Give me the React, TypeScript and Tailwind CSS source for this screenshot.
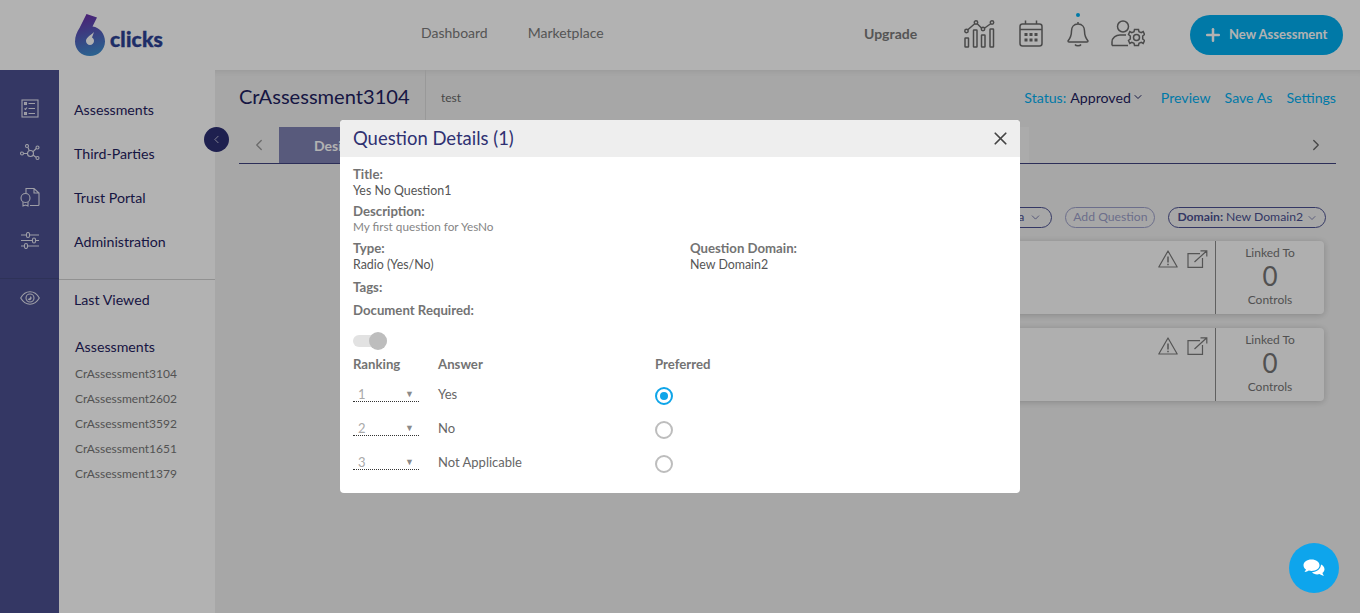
import { ChevronDown, ChevronLeft, ChevronRight, X, Plus } from 'lucide-react'

const sideNav = ['Assessments', 'Third-Parties', 'Trust Portal', 'Administration']
const recent = ['CrAssessment3104', 'CrAssessment2602', 'CrAssessment3592', 'CrAssessment1651', 'CrAssessment1379']
const answers = [
  { rank: 1, label: 'Yes', on: true },
  { rank: 2, label: 'No', on: false },
  { rank: 3, label: 'Not Applicable', on: false },
]

function Logo() {
  return (
    <div className="flex items-end">
      <svg width="32" height="44" viewBox="0 0 32 44" className="block">
        <defs>
          <linearGradient id="six" x1="0.4" y1="0" x2="0.6" y2="1">
            <stop offset="0" stopColor="#6a2fa8" />
            <stop offset="1" stopColor="#3c8fcf" />
          </linearGradient>
        </defs>
        <path
          fillRule="evenodd"
          fill="url(#six)"
          d="M12.500 0 L23 3.500 L18.500 12.500 C26 13.500 31 20 31 27.500 C31 36 24 42 16 42 C7.500 42 1 36 1 27.500 C1 22 3 18 5.500 14 Z M20 18 C18.500 20 12 23 12 27 C12 29.200 13.800 31 16 31 C18.200 31 20 29.200 20 27 C20 25 19 24 18 23.500 Z"
        />
      </svg>
      <span className="mb-[9px] ml-[4px] text-[21px] leading-none font-black tracking-[0.2px] text-[#2b4194] [-webkit-text-stroke:0.4px_#2b4194]">clicks</span>
    </div>
  )
}

function TrendIcon() {
  return (
    <svg width="32" height="28" viewBox="0 0 32 28" fill="none" stroke="#6b6b6b" strokeWidth="1.500" className="block">
      <path d="M3.500 10 L11 3.500 M13 3.500 L18 8.500 M20 8.500 L27 3.500" />
      <circle cx="2.500" cy="11" r="1.700" />
      <circle cx="12" cy="2.500" r="1.700" />
      <circle cx="19" cy="9" r="1.700" />
      <circle cx="28" cy="2.500" r="1.700" />
      <rect x="1" y="18" width="3.500" height="9" rx="0.500" />
      <rect x="9.500" y="10" width="3.500" height="17" rx="0.500" />
      <rect x="17.500" y="15" width="3.500" height="12" rx="0.500" />
      <rect x="26" y="9" width="3.500" height="18" rx="0.500" />
    </svg>
  )
}

function CalendarIcon() {
  return (
    <svg width="24" height="27" viewBox="0 0 24 27" fill="none" stroke="#6b6b6b" strokeWidth="1.500" className="block">
      <rect x="1" y="4" width="22" height="22" rx="2.500" />
      <path d="M1 9.500 H23 M6.500 0.500 V4 M17.500 0.500 V4" />
      <g fill="#6b6b6b" stroke="none">
        <rect x="5.500" y="13" width="3" height="3" />
        <rect x="10.500" y="13" width="3" height="3" />
        <rect x="15.500" y="13" width="3" height="3" />
        <rect x="5.500" y="18.500" width="3" height="3" />
        <rect x="10.500" y="18.500" width="3" height="3" />
        <rect x="15.500" y="18.500" width="3" height="3" />
      </g>
    </svg>
  )
}

function BellIcon() {
  return (
    <svg width="22" height="26" viewBox="0 0 22 26" fill="none" stroke="#6b6b6b" strokeWidth="1.500" className="block">
      <path d="M11 1 V3 M11 3 C6.500 3 4.500 6.500 4.500 10 C4.500 15 3 17.500 1 20 C1 20.800 1.500 21 2 21 H20 C20.500 21 21 20.800 21 20 C19 17.500 17.500 15 17.500 10 C17.500 6.500 15.500 3 11 3 Z" />
      <path d="M8 23.500 C9 25.200 13 25.200 14 23.500" />
    </svg>
  )
}

function UserGearIcon() {
  return (
    <svg width="34" height="27" viewBox="0 0 34 27" fill="none" stroke="#6b6b6b" strokeWidth="1.500" className="block">
      <circle cx="12" cy="6.500" r="5.500" />
      <path d="M1 25.500 V22 C1 17.500 5 15 9 15 H15 M1 25.500 H17" />
      <circle cx="25.500" cy="17.500" r="3" />
      <path d="M23.500 9.500 H27.500 L28 11.800 L30.200 12.700 L32.200 11.500 L33.500 14.500 L31.700 16 V19 L33.500 20.500 L32.200 23.500 L30.200 22.300 L28 23.200 L27.500 25.500 H23.500 L23 23.200 L20.800 22.300 L18.800 23.500 L17.500 20.500 L19.300 19 V16 L17.500 14.500 L18.800 11.500 L20.800 12.700 L23 11.800 Z" />
    </svg>
  )
}

function ChecklistIcon() {
  return (
    <svg width="18" height="19" viewBox="0 0 18 19" fill="none" stroke="#e2e2ee" strokeWidth="1.100" className="block">
      <rect x="1" y="1" width="16" height="17" />
      <path d="M7.500 4.500 H14 M7.500 9.500 H14 M7.500 14.500 H14" />
      <rect x="3.500" y="3.500" width="2" height="2" />
      <path d="M3.500 9.500 L4.500 10.500 L6 8.500" />
      <rect x="3.500" y="13.500" width="2" height="2" />
    </svg>
  )
}

function NetworkIcon() {
  return (
    <svg width="20" height="18" viewBox="0 0 20 18" fill="none" stroke="#e2e2ee" strokeWidth="1.100" className="mt-[1px] block">
      <circle cx="10.500" cy="9.500" r="3" />
      <circle cx="7" cy="2" r="1.500" />
      <circle cx="17.500" cy="3.500" r="1.500" />
      <circle cx="2" cy="9.500" r="1.500" />
      <circle cx="17.500" cy="14" r="1.500" />
      <path d="M8 3.500 L9.300 6.800 M16.300 4.500 L12.800 7.800 M3.500 9.500 H7.500 M16 13.200 L13 11" />
    </svg>
  )
}

function CertificateIcon() {
  return (
    <svg width="20" height="20" viewBox="0 0 20 20" fill="none" stroke="#e2e2ee" strokeWidth="1.100" className="block">
      <path d="M6 6 V1.500 H14 L19 6 V17.500 C19 18 18.500 18.500 18 18.500 H10 M14 1.500 V6 H19" />
      <circle cx="5.500" cy="11" r="4.500" />
      <path d="M3 15 V19 L5.500 18 L8 19 V15" />
    </svg>
  )
}

function SlidersIcon() {
  return (
    <svg width="20" height="17" viewBox="0 0 20 17" fill="none" stroke="#e2e2ee" strokeWidth="1.100" className="block">
      <path d="M1 3 H6 M10 3 H19 M1 8.500 H12 M16 8.500 H19 M1 14 H4 M8 14 H19" />
      <rect x="6.500" y="0.500" width="3" height="5" rx="1.500" />
      <rect x="12.500" y="6" width="3" height="5" rx="1.500" />
      <rect x="4.500" y="11.500" width="3" height="5" rx="1.500" />
    </svg>
  )
}

function EyeIcon() {
  return (
    <svg width="20" height="14" viewBox="0 0 20 14" fill="none" stroke="#e2e2ee" strokeWidth="1.100" className="block">
      <path d="M0.700 7 C3 3 6.500 0.800 10 0.800 C13.500 0.800 17 3 19.300 7 C17 11 13.500 13.200 10 13.200 C6.500 13.200 3 11 0.700 7 Z" />
      <circle cx="10" cy="7" r="4" />
      <path d="M7.500 8 C9 8 10.500 6.800 10.500 5 C12 6 12 8 10.500 9 C9.500 9.600 8.500 9 7.500 8 Z" fill="#e2e2ee" stroke="none" />
    </svg>
  )
}

function WarnIcon() {
  return (
    <svg width="20" height="18" viewBox="0 0 20 18" fill="none" stroke="#7a7a7a" strokeWidth="1.200" className="block">
      <path d="M10 1 L19.200 17 H0.800 Z" strokeLinejoin="round" />
      <path d="M10 6.500 V12.500 M10 13.800 V15.200" strokeWidth="1.500" />
    </svg>
  )
}

function OpenIcon() {
  return (
    <svg width="21" height="18" viewBox="0 0 21 18" fill="none" stroke="#7a7a7a" strokeWidth="1.200" className="block">
      <path d="M13 3.600 H1 V17.300 H15.500 V8" />
      <path d="M7.500 12 L19.800 0.800 M13.500 0.800 H19.800 V6.500" />
    </svg>
  )
}

function QuestionCard() {
  return (
    <div className="flex h-[73px] w-[900px] rounded-[4px] bg-[#fbfbfb] shadow-[0_1px_7px_rgba(0,0,0,0.2)]">
      <div className="flex flex-1 justify-end gap-[9px] pr-[7px] pt-[9px]">
        <WarnIcon />
        <OpenIcon />
      </div>
      <div className="flex w-[109px] flex-col items-center border-l border-[#8a8a8a] pt-[4px] text-[12px] leading-[15px] text-[#757575]">
        <span>Linked To</span>
        <span className="mt-[1px] text-[26px] leading-[30px] text-[#757575]">0</span>
        <span className="mt-[1px]">Controls</span>
      </div>
    </div>
  )
}

function Modal() {
  return (
    <div className="h-[373px] w-[680px] overflow-hidden rounded-[4px] bg-white">
      <div className="flex h-[37px] items-center justify-between bg-[#eeeeee] pl-[13px] pr-[9px]">
        <h2 className="text-[18.450px] text-[#2f3172]">Question Details (1)</h2>
        <X size={21} strokeWidth={2} className="mb-[1px] text-[#444444]" />
      </div>
      <div className="px-[13px] pt-[9px] text-[12.400px] leading-[16px] text-[#555555]">
        <div className="text-[13.200px] font-bold text-[#737373]">Title:</div>
        <div className="mt-[1px]">Yes No Question1</div>
        <div className="mt-[4px] text-[13.200px] font-bold text-[#737373]">Description:</div>
        <div className="text-[11.750px] text-[#858585]">My first question for YesNo</div>
        <div className="mt-[5px] flex">
          <div className="w-[337px]">
            <div className="text-[13.200px] font-bold text-[#737373]">Type:</div>
            <div className="mt-[1px]">Radio (Yes/No)</div>
          </div>
          <div>
            <div className="text-[13.200px] font-bold text-[#737373]">Question Domain:</div>
            <div className="mt-[1px]">New Domain2</div>
          </div>
        </div>
        <div className="mt-[6px] text-[13.200px] font-bold text-[#737373]">Tags:</div>
        <div className="mt-[7px] text-[13.200px] font-bold text-[#737373]">Document Required:</div>
        <div className="relative mt-[14px] h-[18px] w-[34px]">
          <div className="absolute left-0 top-[3px] h-[12px] w-[34px] rounded-full bg-[#e2e2e2]" />
          <div className="absolute right-0 top-0 h-[18px] w-[18px] rounded-full bg-[#bdbdbd]" />
        </div>
        <div className="mt-[6px] flex text-[13.200px] font-bold text-[#737373]">
          <div className="w-[85px]">Ranking</div>
          <div className="w-[217px]">Answer</div>
          <div>Preferred</div>
        </div>
        <div className="mt-[11px] flex flex-col">
          {answers.map((a) => (
            <div key={a.rank} className="flex h-[34px] items-start">
              <div className="mr-[19px] flex h-[19px] w-[66px] items-end justify-between border-b border-dotted border-[#333333] pl-[5px] pr-[5px] text-[13px] leading-[13px] text-[#aaaaaa]">
                <span>{a.rank}</span>
                <span className="mb-[1px] text-[9px] text-[#8a8a8a]">▼</span>
              </div>
              <div className="w-[217px] pt-[3px] text-[13px] text-[#666666]">{a.label}</div>
              <div className={`mt-[4px] flex h-[18px] w-[18px] items-center justify-center rounded-full border-2 ${a.on ? 'border-[#0ea5e9]' : 'border-[#bdbdbd]'}`}>
                {a.on && <div className="h-[8px] w-[8px] rounded-full bg-[#0ea5e9]" />}
              </div>
            </div>
          ))}
        </div>
      </div>
    </div>
  )
}

export default function App() {
  return (
    <div className="relative h-[613px] w-[1360px] overflow-hidden bg-[#f0f0f0] font-['Lato',sans-serif]">
      <header className="flex h-[70px] items-center bg-white">
        <div className="w-[421px] pl-[74px] pt-[1px]">
          <Logo />
        </div>
        <nav className="mb-[6px] flex w-[443px] gap-[40px] text-[14px] text-[#7a7a7a]">
          <span>Dashboard</span>
          <span>Marketplace</span>
        </nav>
        <span className="mb-[4px] w-[100px] text-[14px] font-bold text-[#7a7a7a]">Upgrade</span>
        <div className="mb-[3px] flex items-center">
          <div className="mr-[23px]"><TrendIcon /></div>
          <div className="mr-[24px]"><CalendarIcon /></div>
          <div className="relative mr-[22px]">
            <BellIcon />
            <div className="absolute left-[9px] top-[-8px] h-[4px] w-[4px] rounded-full bg-[#00aeef]" />
          </div>
          <UserGearIcon />
        </div>
        <button className="ml-[45px] flex h-[40px] w-[153px] items-center gap-[6px] rounded-full bg-[#00aeef] pl-[13px] text-[13px] font-bold text-white">
          <Plus size={20} strokeWidth={3} />
          New Assessment
        </button>
      </header>

      <div className="flex h-[543px]">
        <aside className="w-[59px] bg-[#4b5090]">
          <div className="flex h-[209px] flex-col items-center gap-[25px] border-b border-[#43487f] pt-[29px]">
            <ChecklistIcon />
            <NetworkIcon />
            <CertificateIcon />
            <SlidersIcon />
          </div>
          <div className="flex justify-center pt-[12px]">
            <EyeIcon />
          </div>
        </aside>

        <aside className="w-[156px] bg-white text-[#1f2260]">
          <div className="flex h-[210px] flex-col gap-[26px] border-b border-[#d0d0d0] pl-[15px] pt-[31px] text-[14.200px] leading-[18px]">
            {sideNav.map((s) => (
              <span key={s}>{s}</span>
            ))}
          </div>
          <div className="pl-[15px] pt-[11px] text-[14.200px] leading-[18px]">Last Viewed</div>
          <div className="pl-[16px] pt-[29px] text-[14.200px] leading-[18px]">Assessments</div>
          <div className="flex flex-col gap-[7px] pl-[16px] pt-[9px] text-[12px] leading-[18px] text-[#777777]">
            {recent.map((r) => (
              <span key={r}>{r}</span>
            ))}
          </div>
        </aside>

        <main className="flex-1 pl-[24px] pr-[24px] shadow-[inset_0_8px_8px_-8px_rgba(0,0,0,0.12)]">
          <div className="flex h-[57px] items-center">
            <h1 className="mb-[4px] w-[186px] text-[20.100px] text-[#1f2260]">CrAssessment3104</h1>
            <div className="flex h-[57px] items-center border-l border-[#dcdcdc] pb-[2px] pl-[15px] text-[12px] text-[#666666]">test</div>
            <div className="mb-[2px] ml-auto flex items-center text-[14.150px] text-[#00aeef]">
              <span className="mr-[4px]">Status:</span>
              <span className="text-[#1f2260]">Approved</span>
              <ChevronDown size={12} className="ml-[1px] mr-[17px] text-[#1f2260]" />
              <span className="mr-[14px]">Preview</span>
              <span className="mr-[14px]">Save As</span>
              <span>Settings</span>
            </div>
          </div>

          <div className="flex h-[37px] items-stretch border-b border-[#3f437f]">
            <div className="flex w-[40px] items-center justify-center text-[#999999]">
              <ChevronLeft size={18} strokeWidth={1.800} />
            </div>
            <div className="flex w-[200px] items-center bg-[#7f82b2] pl-[35px] text-[14px] font-bold text-white">Design</div>
            <div className="w-[550px] bg-[#f5f5f5]" />
            <div className="ml-auto flex w-[40px] items-center justify-center text-[#666666]">
              <ChevronRight size={18} strokeWidth={1.800} />
            </div>
          </div>

          <div className="flex h-[76px] items-center justify-end gap-[13px] pr-[10px] pt-[31px] text-[12.200px]">
            <div className="flex h-[21px] items-center gap-[5px] rounded-full border border-[#4b5090] pl-[10px] pr-[9px] text-[#4b5090]">
              Criteria <ChevronDown size={13} strokeWidth={1.300} />
            </div>
            <div className="flex h-[21px] w-[90px] items-center justify-center rounded-full border border-[#9b9ec7] text-[#9b9ec7]">Add Question</div>
            <div className="flex h-[21px] items-center gap-[3px] rounded-full border border-[#4b5090] pl-[8px] pr-[7px] text-[#4b5090]">
              <b>Domain:</b> New Domain2 <ChevronDown size={12} strokeWidth={1.300} />
            </div>
          </div>

          <div className="flex flex-col items-end gap-[14px] pr-[12px] pt-[1px]">
            <QuestionCard />
            <QuestionCard />
          </div>
        </main>
      </div>

      {/* collapse handle */}
      <div className="absolute left-[204px] top-[127px] flex h-[25px] w-[25px] items-center justify-center rounded-full bg-[#2c2e72] text-white">
        <ChevronLeft size={13} strokeWidth={1.200} />
      </div>

      {/* backdrop + dialog */}
      <div className="absolute inset-0 flex justify-center bg-black/30 pt-[120px]">
        <Modal />
      </div>

      <div className="absolute left-[1289px] top-[543px] flex h-[50px] w-[50px] items-center justify-center rounded-full bg-[#0ea5ec]">
        <svg width="22" height="19" viewBox="0 0 22 19" fill="white" className="block">
          <path d="M8.500 0.500 C3.800 0.500 0.500 3 0.500 6.200 C0.500 8 1.500 9.400 3 10.500 C2.700 11.500 2 12.300 1.500 13 C3.300 12.800 4.800 12.200 5.800 11.500 C6.700 11.800 7.600 11.900 8.500 11.900 C13.200 11.900 16.500 9.400 16.500 6.200 C16.500 3 13.200 0.500 8.500 0.500 Z" />
          <path d="M18 5.500 C18 10 13.800 13 9 13.200 C10.200 14.600 12 15.400 14.200 15.400 C15 15.400 15.800 15.300 16.500 15 C17.500 15.800 19 16.500 21 16.700 C20.300 15.900 19.700 15 19.400 14 C20.700 13 21.500 11.700 21.500 10.200 C21.500 8.200 20.100 6.500 18 5.500 Z" />
        </svg>
      </div>
    </div>
  )
}
